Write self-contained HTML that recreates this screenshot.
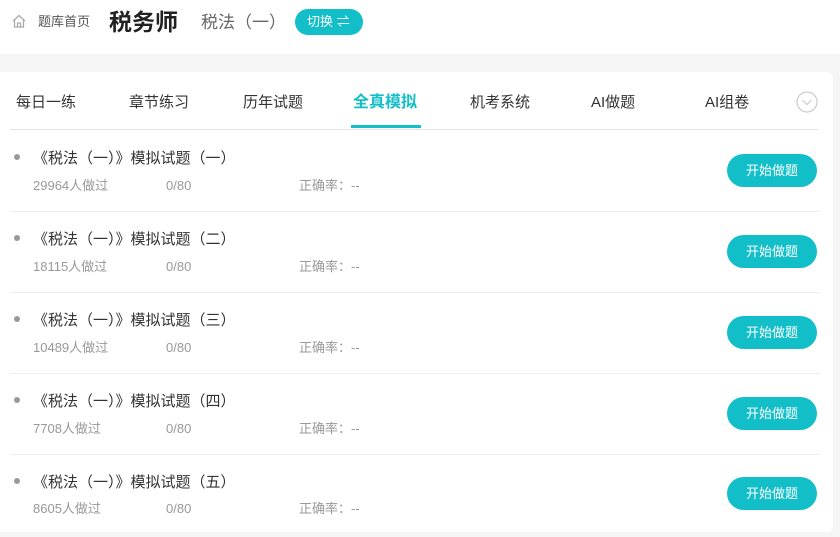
<!DOCTYPE html>
<html><head><meta charset="utf-8"><style>
*{margin:0;padding:0;box-sizing:border-box}
body{width:840px;height:537px;background:#f5f5f5;font-family:"Liberation Sans","Noto Sans CJK SC",sans-serif;position:relative;overflow:hidden}
.top{position:absolute;left:0;top:0;width:840px;height:54px;background:#fff}
.abs{position:absolute;white-space:nowrap}
.card{position:absolute;left:0;top:72px;width:833px;height:460px;background:#fff;border-radius:0 6px 6px 0}
.tab{position:absolute;top:93px;font-size:15px;line-height:20px;color:#333}
.btn{position:absolute;left:727px;width:90px;height:33px;border-radius:17px;background:#12bfc9;color:#fff;font-size:13px;text-align:center;line-height:33px}
.dot{position:absolute;left:14px;width:6px;height:6px;border-radius:50%;background:#999}
.t{position:absolute;left:33px;font-size:15px;line-height:20px;color:#333;white-space:nowrap}
.m{position:absolute;font-size:13px;line-height:16px;color:#999;white-space:nowrap}
.sep{position:absolute;left:10px;width:810px;height:1px;background:#eee}
</style></head><body>
<div class="top"></div>
<svg class="abs" style="left:11px;top:13px" width="16" height="16" viewBox="0 0 16 16"><path d="M2 8 L8 2.5 L14 8 M3.5 7 V14 H12.5 V7 M6.5 14 V10 H9.5 V14" fill="none" stroke="#aaa" stroke-width="1.3"/></svg>
<div class="abs" style="left:38px;top:14px;font-size:13px;line-height:16px;color:#555">题库首页</div>
<div class="abs" style="left:109px;top:7px;font-size:23px;line-height:30px;font-weight:bold;color:#222">税务师</div>
<div class="abs" style="left:201px;top:12px;font-size:17px;line-height:22px;color:#666">税法（一）</div>
<div class="abs" style="left:295px;top:9px;width:68px;height:26px;border-radius:13px;background:#12bfc9;color:#fff;font-size:13px;line-height:26px;padding-left:12px">切换 ⇌</div>
<div class="card"></div>
<div class="tab" style="left:16px">每日一练</div>
<div class="tab" style="left:129px">章节练习</div>
<div class="tab" style="left:243px">历年试题</div>
<div class="tab" style="left:353px;color:#12bfc9;font-weight:bold;font-size:16px;top:93px">全真模拟</div>
<div class="tab" style="left:470px">机考系统</div>
<div class="tab" style="left:591px">AI做题</div>
<div class="tab" style="left:705px">AI组卷</div>
<svg class="abs" style="left:796px;top:91px" width="22" height="22" viewBox="0 0 22 22"><circle cx="11" cy="11" r="10" fill="none" stroke="#ccc" stroke-width="1.2"/><path d="M6.5 9 L11 13.5 L15.5 9" fill="none" stroke="#ccc" stroke-width="1.2"/></svg>
<div class="abs" style="left:10px;top:129px;width:808px;height:1px;background:#e5e5e5"></div>
<div class="abs" style="left:351px;top:125px;width:70px;height:3px;background:#12bfc9"></div>

<div class="dot" style="top:154px"></div><div class="t" style="top:149px">《税法（一）》模拟试题（一）</div>
<div class="m" style="left:33px;top:178px">29964人做过</div><div class="m" style="left:166px;top:178px">0/80</div><div class="m" style="left:299px;top:178px">正确率：--</div>
<div class="btn" style="top:154px">开始做题</div>
<div class="sep" style="top:211px"></div>

<div class="dot" style="top:235px"></div><div class="t" style="top:230px">《税法（一）》模拟试题（二）</div>
<div class="m" style="left:33px;top:259px">18115人做过</div><div class="m" style="left:166px;top:259px">0/80</div><div class="m" style="left:299px;top:259px">正确率：--</div>
<div class="btn" style="top:235px">开始做题</div>
<div class="sep" style="top:292px"></div>

<div class="dot" style="top:316px"></div><div class="t" style="top:311px">《税法（一）》模拟试题（三）</div>
<div class="m" style="left:33px;top:340px">10489人做过</div><div class="m" style="left:166px;top:340px">0/80</div><div class="m" style="left:299px;top:340px">正确率：--</div>
<div class="btn" style="top:316px">开始做题</div>
<div class="sep" style="top:373px"></div>

<div class="dot" style="top:397px"></div><div class="t" style="top:392px">《税法（一）》模拟试题（四）</div>
<div class="m" style="left:33px;top:421px">7708人做过</div><div class="m" style="left:166px;top:421px">0/80</div><div class="m" style="left:299px;top:421px">正确率：--</div>
<div class="btn" style="top:397px">开始做题</div>
<div class="sep" style="top:454px"></div>

<div class="dot" style="top:478px"></div><div class="t" style="top:473px">《税法（一）》模拟试题（五）</div>
<div class="m" style="left:33px;top:501px">8605人做过</div><div class="m" style="left:166px;top:501px">0/80</div><div class="m" style="left:299px;top:501px">正确率：--</div>
<div class="btn" style="top:477px">开始做题</div>
</body></html>
